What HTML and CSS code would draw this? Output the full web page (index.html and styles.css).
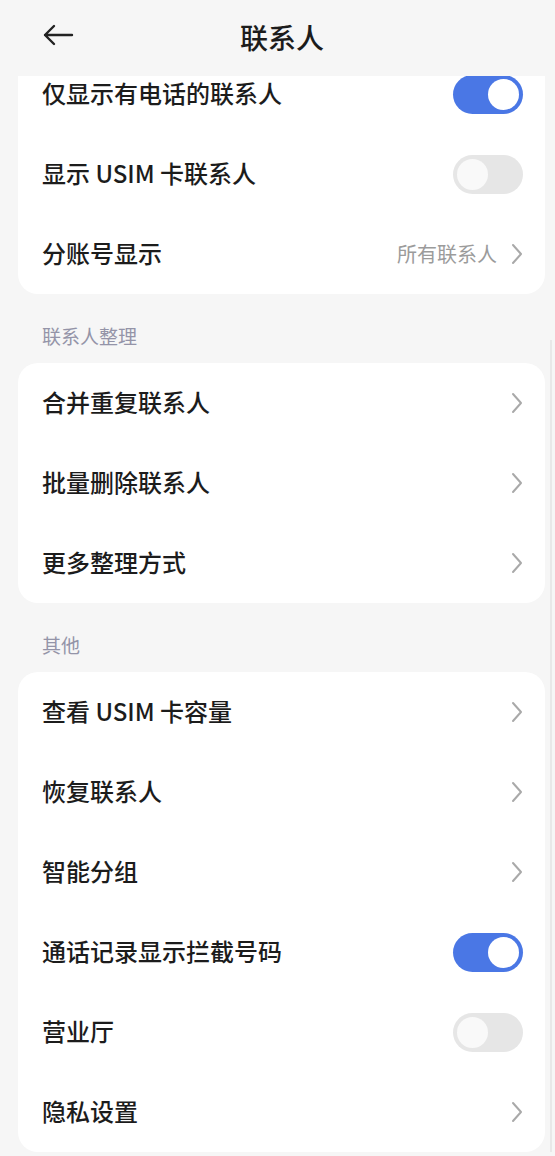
FILE: index.html
```html
<!DOCTYPE html>
<html lang="zh-CN">
<head>
  <meta charset="UTF-8">
  <title>联系人</title>
  <link rel="stylesheet" href="styles.css">
</head>
<body>

<div class="header">
  <svg class="back" width="32" height="24" viewBox="0 0 32 24">
    <path d="M30 12H3M12 3L3 12l9 9" fill="none" stroke="#222" stroke-width="2.4" stroke-linecap="round" stroke-linejoin="round"/>
  </svg>
  <h1 class="title">联系人</h1>
</div>

<div class="content">
  <div class="card card-cut">
    <div class="row">
      <span class="label">仅显示有电话的联系人</span>
      <span class="switch on"></span>
    </div>
    <div class="row">
      <span class="label">显示 USIM 卡联系人</span>
      <span class="switch"></span>
    </div>
    <div class="row">
      <span class="label">分账号显示</span>
      <span class="value">所有联系人</span>
      <svg class="chev" width="12" height="22" viewBox="0 0 12 22"><path d="M2 2l8 9-8 9" fill="none" stroke="#a9a9a9" stroke-width="2" stroke-linecap="round" stroke-linejoin="round"/></svg>
    </div>
  </div>

  <div class="section">联系人整理</div>
  <div class="card">
    <div class="row">
      <span class="label">合并重复联系人</span>
      <svg class="chev" width="12" height="22" viewBox="0 0 12 22"><path d="M2 2l8 9-8 9" fill="none" stroke="#a9a9a9" stroke-width="2" stroke-linecap="round" stroke-linejoin="round"/></svg>
    </div>
    <div class="row">
      <span class="label">批量删除联系人</span>
      <svg class="chev" width="12" height="22" viewBox="0 0 12 22"><path d="M2 2l8 9-8 9" fill="none" stroke="#a9a9a9" stroke-width="2" stroke-linecap="round" stroke-linejoin="round"/></svg>
    </div>
    <div class="row">
      <span class="label">更多整理方式</span>
      <svg class="chev" width="12" height="22" viewBox="0 0 12 22"><path d="M2 2l8 9-8 9" fill="none" stroke="#a9a9a9" stroke-width="2" stroke-linecap="round" stroke-linejoin="round"/></svg>
    </div>
  </div>

  <div class="section">其他</div>
  <div class="card">
    <div class="row">
      <span class="label">查看 USIM 卡容量</span>
      <svg class="chev" width="12" height="22" viewBox="0 0 12 22"><path d="M2 2l8 9-8 9" fill="none" stroke="#a9a9a9" stroke-width="2" stroke-linecap="round" stroke-linejoin="round"/></svg>
    </div>
    <div class="row">
      <span class="label">恢复联系人</span>
      <svg class="chev" width="12" height="22" viewBox="0 0 12 22"><path d="M2 2l8 9-8 9" fill="none" stroke="#a9a9a9" stroke-width="2" stroke-linecap="round" stroke-linejoin="round"/></svg>
    </div>
    <div class="row">
      <span class="label">智能分组</span>
      <svg class="chev" width="12" height="22" viewBox="0 0 12 22"><path d="M2 2l8 9-8 9" fill="none" stroke="#a9a9a9" stroke-width="2" stroke-linecap="round" stroke-linejoin="round"/></svg>
    </div>
    <div class="row">
      <span class="label">通话记录显示拦截号码</span>
      <span class="switch on"></span>
    </div>
    <div class="row">
      <span class="label">营业厅</span>
      <span class="switch"></span>
    </div>
    <div class="row">
      <span class="label">隐私设置</span>
      <svg class="chev" width="12" height="22" viewBox="0 0 12 22"><path d="M2 2l8 9-8 9" fill="none" stroke="#a9a9a9" stroke-width="2" stroke-linecap="round" stroke-linejoin="round"/></svg>
    </div>
  </div>
</div>

<div class="scrollbar"></div>

</body>
</html>
```

FILE: styles.css
```css
body {
  margin: 0;
  background: #f6f6f6;
  font-family: "Noto Sans CJK SC", "Noto Sans", sans-serif;
  color: #1c1c1c;
  height: 1156px;
  overflow: hidden;
  position: relative;
}

.header {
  height: 76px;
  display: flex;
  align-items: center;
  justify-content: center;
  position: relative;
}
.back { position: absolute; left: 42px; top: 23px; }
.title { margin: -3px 0 0 9px; font-size: 28px; font-weight: 500; line-height: 1; }

.content { padding: 0 10px 0 18px; }

.card { background: #fff; border-radius: 20px; overflow: hidden; }
.card-cut { border-radius: 0 0 20px 20px; }
.card-cut .row:first-child { margin-top: -22px; }

.row {
  height: 80px;
  display: flex;
  align-items: center;
  padding: 0 22px 0 24px;
}
.label { flex: 1; font-size: 24px; font-weight: 500; line-height: 1; margin-top: -3px; }
.value { font-size: 20px; color: #9b9b9b; margin-right: 14px; margin-top: -2px; }
.chev { display: block; }

.section {
  padding: 31px 24px 16px;
  font-size: 19px;
  line-height: 22px;
  color: #9494a8;
}

.switch {
  width: 70px;
  height: 39px;
  border-radius: 20px;
  background: #e6e6e6;
  position: relative;
  flex: none;
}
.switch::after {
  content: "";
  position: absolute;
  top: 4px;
  left: 4px;
  width: 31px;
  height: 31px;
  border-radius: 50%;
  background: #f9f9f9;
}
.switch.on { background: #4a77e5; }
.switch.on::after { left: 35px; background: #fff; }

.scrollbar {
  position: absolute;
  right: 3px;
  top: 340px;
  width: 2px;
  height: 812px;
  background: #e8e8e8;
}
```
